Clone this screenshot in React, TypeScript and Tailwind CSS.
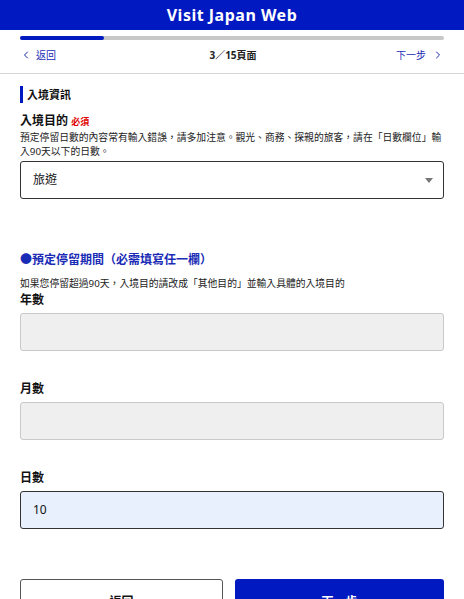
import { ChevronLeft, ChevronRight } from 'lucide-react'

const font = { fontFamily: '"Noto Sans", "Noto Sans CJK TC", sans-serif' }

function Field({ label, value, active, mt }: { label: string; value?: string; active?: boolean; mt: string }) {
  return (
    <div className={mt}>
      <p className="h-[16px] text-[12px] font-bold leading-[16px] text-[#111]">{label}</p>
      <div
        className={
          active
            ? 'mt-[5px] h-[38px] rounded-[3px] border border-[#333] bg-[#e8f0fe] px-[12px] flex items-center text-[12px] text-[#111]'
            : 'mt-[5px] h-[38px] rounded-[3px] border border-[#c9c9c9] bg-[#efefef] px-[12px] flex items-center text-[12px]'
        }
      >
        {value}
      </div>
    </div>
  )
}

export default function App() {
  return (
    <div className="w-[464px] h-[599px] overflow-hidden bg-white" style={font}>
      <header className="h-[30px] bg-[#0019c1] flex items-center justify-center">
        <h1 className="text-[16px] font-bold text-white tracking-[0.5px]">Visit Japan Web</h1>
      </header>

      <div className="px-5 pt-[6px]">
        <div className="h-[4px] rounded-full bg-[#c8c8c8] flex">
          <div className="w-[84px] h-full rounded-full bg-[#0019c1]" />
        </div>
      </div>

      <nav className="h-[34px] pb-[3px] px-5 flex items-center justify-between border-b border-[#d4d4d4] text-[10px]">
        <button className="flex items-center gap-[4px] text-[#1a2bb5]">
          <ChevronLeft className="w-[12px] h-[12px]" strokeWidth={2} />
          返回
        </button>
        <span className="font-bold text-[#222] pl-[14px]">3／15頁面</span>
        <button className="flex items-center gap-[6px] text-[#1a2bb5]">
          下一步
          <ChevronRight className="w-[12px] h-[12px]" strokeWidth={2} />
        </button>
      </nav>

      <main className="px-5">
        <h2 className="mt-[12px] h-[17px] border-l-[3px] border-[#0019c1] pl-[4px] text-[11px] font-bold leading-[17px] text-[#111]">
          入境資訊
        </h2>

        <p className="mt-[10px] h-[16px] text-[12px] font-bold leading-[16px] text-[#111]">
          入境目的 <span className="text-[9px] text-[#e00000]">必須</span>
        </p>
        <p className="mt-[2px] text-[9.8px] leading-[14px] text-[#222]">
          預定停留日數的內容常有輸入錯誤，請多加注意。觀光、商務、探親的旅客，請在「日數欄位」輸入90天以下的日數。
        </p>

        <div className="mt-[2px] h-[38px] rounded-[3px] border border-[#333] px-[12px] flex items-center justify-between text-[12px] text-[#111]">
          <span>旅遊</span>
          <span className="w-0 h-0 border-l-[4px] border-r-[4px] border-t-[5px] border-l-transparent border-r-transparent border-t-[#777] mr-[-2px]" />
        </div>

        <p className="mt-[53px] h-[16px] text-[12px] font-bold leading-[16px] text-[#1a2bb5]">●預定停留期間（必需填寫任一欄）</p>
        <p className="mt-[9px] text-[9.8px] leading-[14px] text-[#222]">
          如果您停留超過90天，入境目的請改成「其他目的」並輸入具體的入境目的
        </p>

        <Field label="年數" mt="mt-[1px]" />
        <Field label="月數" mt="mt-[30px]" />
        <Field label="日數" value="10" active mt="mt-[30px]" />

        <div className="mt-[50px] grid grid-cols-[203px_1fr] gap-3">
          <button className="h-[46px] rounded-[3px] border border-[#555] bg-white text-[12px] font-bold text-[#111]">返回</button>
          <button className="h-[46px] rounded-[3px] bg-[#0019c1] text-[12px] font-bold text-white">下一步</button>
        </div>
      </main>
    </div>
  )
}
